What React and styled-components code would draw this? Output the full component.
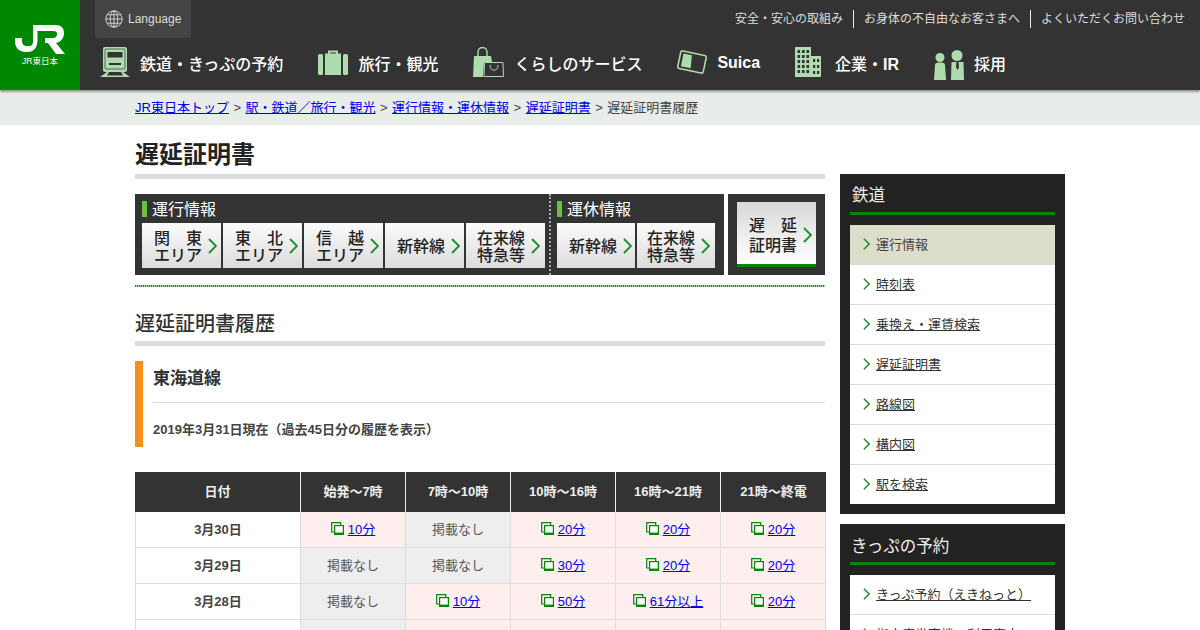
import React from 'react';
import styled, { createGlobalStyle } from 'styled-components';

const GlobalStyle = createGlobalStyle`
  html, body {
    margin: 0;
    height: 630px;
    overflow: hidden;
    background: #fff;
    color: #333;
    font-family: "Liberation Sans", "Noto Sans CJK JP", sans-serif;
    font-size: 13px;
  }
`;

const Header = styled.header`
  position: relative;
  z-index: 2;
  display: flex;
  height: 90px;
  background: #333;
  box-shadow: 0 2px 2px rgba(0, 0, 0, 0.35);
`;

const Logo = styled.a`
  display: flex;
  flex-direction: column;
  align-items: center;
  width: 80px;
  padding-top: 25px;
  box-sizing: border-box;
  background: #008803;
  color: #fff;
  font-size: 8.500px;
  line-height: 12px;
`;

const HeaderBody = styled.div`
  flex: 1;
  display: flex;
  flex-direction: column;
`;

const TopRow = styled.div`
  display: flex;
  justify-content: space-between;
  height: 38px;
  padding: 0 15px;
`;

const LangButton = styled.a`
  display: flex;
  align-items: center;
  gap: 5px;
  padding: 0 10px;
  background: #444;
  border-radius: 0 0 3px 3px;
  color: #ddd;
  font-size: 12px;
`;

const TopLinks = styled.div`
  display: flex;
  align-items: flex-start;
  padding-top: 10px;
`;

const TopLink = styled.a`
  padding: 0 10px;
  color: #ddd;
  font-size: 12px;
  line-height: 18px;
  border-left: 1px solid #eee;
  &:first-child {
    border-left: none;
  }
  &:last-child {
    padding-right: 0;
  }
`;

const Nav = styled.nav`
  display: flex;
  align-items: center;
  gap: 35px;
  height: 52px;
  padding-left: 20px;
`;

const NavItem = styled.a`
  display: flex;
  align-items: center;
  gap: 10px;
  color: #fff;
  font-size: 16px;
  font-weight: 500;
  white-space: nowrap;
  b {
    font-weight: 700;
  }
`;

const NavIcon = styled.span`
  display: flex;
  margin-bottom: ${(p) => -2 * p.$shift}px;
`;

const NavText = styled.span`
  padding-bottom: 2px;
`;

const Crumbs = styled.div`
  height: 35px;
  line-height: 35px;
  padding-left: 135px;
  background: #e8ede9;
  color: #444;
  font-size: 13px;
  a {
    color: #00e;
    text-decoration: underline;
  }
`;

const CrumbSep = styled.span`
  padding: 0 4.500px;
`;

const Page = styled.div`
  display: flex;
  gap: 15px;
  width: 930px;
  margin: 0 auto;
`;

const Main = styled.main`
  width: 690px;
`;

const Side = styled.aside`
  width: 225px;
  padding-top: 49px;
`;

const Title = styled.h1`
  margin: 0;
  padding-top: 13px;
  height: 36px;
  border-bottom: 5px solid #ddd;
  color: #222;
  font-size: 24px;
  font-weight: 700;
  line-height: 34px;
`;

const TabsRow = styled.div`
  display: flex;
  gap: 4px;
  margin-top: 15px;
  height: 81px;
`;

const TabPanel = styled.div`
  display: flex;
  background: #333;
`;

const TabGroup = styled.div`
  padding: 7px 0 0 7px;
  width: ${(p) => p.$width}px;
  box-sizing: border-box;
  & + & {
    border-left: 2px dotted #aaa;
    padding-left: 6px;
  }
`;

const TabHeading = styled.div`
  display: flex;
  align-items: flex-start;
  gap: 5px;
  height: 16px;
  margin-bottom: 6px;
  color: #fff;
  font-size: 16px;
  line-height: 18px;
  &::before {
    content: '';
    width: 5px;
    height: 16px;
    background: #6cc040;
  }
`;

const TabButtons = styled.div`
  display: flex;
  gap: 2px;
`;

const TabButton = styled.a`
  display: flex;
  align-items: center;
  gap: 6px;
  width: ${(p) => p.$width || 79}px;
  height: 45px;
  padding-left: ${(p) => p.$pad || 12}px;
  box-sizing: border-box;
  background: linear-gradient(#fbfbfb, #dcdcdc);
  color: #222;
  font-size: 16px;
  font-weight: 500;
  line-height: 17px;
`;

const TabLabel = styled.span`
  width: 48px;
  padding-top: 2px;
  white-space: pre;
`;

const ActivePanel = styled(TabPanel)`
  width: 97px;
  padding: 8px 9px;
  box-sizing: border-box;
`;

const ActiveTab = styled(TabButton)`
  height: 65px;
  padding-top: 3px;
  background: linear-gradient(#d8d8d8, #fff);
  border-bottom: 3px solid #008803;
  line-height: 20px;
`;

const GreenDots = styled.div`
  height: 2px;
  margin-top: 10px;
  background: repeating-linear-gradient(90deg, #1c8a1c 0 1px, #a8d0a8 1px 2px);
`;

const SubTitle = styled.h2`
  margin: 24px 0 0;
  height: 30px;
  border-bottom: 5px solid #ddd;
  color: #333;
  font-size: 20px;
  font-weight: 500;
  line-height: 26px;
`;

const LineBox = styled.section`
  margin-top: 15px;
  height: 86px;
  padding-left: 10px;
  border-left: 8px solid #f7901e;
  box-sizing: border-box;
`;

const LineName = styled.h3`
  margin: 0;
  height: 41px;
  border-bottom: 1px solid #ddd;
  color: #333;
  font-size: 17px;
  font-weight: 700;
  line-height: 36px;
`;

const LineNote = styled.p`
  margin: 0;
  color: #444;
  font-size: 13px;
  font-weight: 700;
  line-height: 54px;
`;

const Table = styled.table`
  width: 691px;
  margin-top: 25px;
  table-layout: fixed;
  border-collapse: separate;
  border-spacing: 0;
`;

const Th = styled.th`
  width: 105px;
  height: 40px;
  padding: 0 0 4px;
  box-sizing: border-box;
  background: #333;
  border-left: 1px solid #eee;
  color: #eee;
  font-size: 13px;
  font-weight: 700;
  &:first-child {
    width: 165px;
    border-left: none;
  }
  &:last-child {
    width: 106px;
  }
`;

const DateCell = styled.td`
  height: 36px;
  padding: 0 0 3px;
  box-sizing: border-box;
  border-left: 1px solid #ddd;
  border-bottom: 1px solid #ddd;
  background: #fff;
  color: #444;
  font-weight: 700;
  text-align: center;
`;

const Cell = styled.td`
  height: 36px;
  padding: 0 0 3px;
  box-sizing: border-box;
  border-left: 1px solid #ddd;
  border-bottom: 1px solid #ddd;
  background: ${(p) => (p.$late ? '#ffeeee' : '#eeeeee')};
  color: #555;
  text-align: center;
  &:last-child {
    border-right: 1px solid #ddd;
  }
  a {
    color: #00e;
    text-decoration: underline;
  }
  svg {
    margin-right: 4px;
    vertical-align: -1px;
  }
`;

const SideBox = styled.div`
  padding: 12px 10px 10px;
  margin-bottom: 10px;
  background: #222;
`;

const SideTitle = styled.div`
  height: 26px;
  padding-left: ${(p) => (p.$big ? 1 : 2)}px;
  border-bottom: 3px solid #008803;
  margin-bottom: 10px;
  color: #eee;
  font-size: 16.500px;
  line-height: ${(p) => (p.$big ? 20 : 18)}px;
`;

const SideList = styled.ul`
  margin: 0;
  padding: 0;
  list-style: none;
  background: #fff;
`;

const SideItem = styled.li`
  display: flex;
  align-items: center;
  gap: 6px;
  height: 40px;
  padding: 0 0 2px 13px;
  box-sizing: border-box;
  background: ${(p) => (p.$active ? '#ddddcc' : '#fff')};
  border-bottom: 1px solid ${(p) => (p.$active ? '#ddddcc' : '#ddd')};
  color: #444;
  font-size: 13px;
  &:last-child {
    height: 39px;
    border-bottom: none;
  }
  a {
    color: #333;
    text-decoration: underline;
  }
`;

const Chevron = ({ w = 9, h = 16, sw = 1.9 }) => (
  <svg width={w} height={h} viewBox="0 0 9 16" fill="none" style={{ flex: 'none' }}>
    <path d="M1 1l7 7-7 7" stroke="#1b8f2a" strokeWidth={sw} />
  </svg>
);

const CopyIcon = () => (
  <svg width="13" height="13" viewBox="0 0 13 13" fill="none">
    <path d="M3 10H.7V.7h9V3" stroke="#008803" strokeWidth="1.2" />
    <rect x="3.6" y="3.6" width="8.8" height="8.8" fill="#fff" stroke="#008803" strokeWidth="1.2" />
    <rect x="3" y="10.6" width="10" height="2.4" fill="#008803" />
  </svg>
);

const JrMark = () => (
  <svg width="50" height="30" viewBox="0 0 50 30">
    <path
      d="M0 13h7v3c0 3 2 5 5 5h2c3 0 4-2 4-5V0h4.500v15c0 8-4 12-10 12H11C4 27 0 23 0 16z"
      fill="#fff"
    />
    <path
      d="M22 0h19c5 0 8 3 8 8s-3 9-8 10l9 11h-9l-8-11h-3v-5h8c3 0 4-2 4-4s-1-3-4-3H22z"
      fill="#fff"
    />
  </svg>
);

const GlobeIcon = () => (
  <svg width="18" height="18" viewBox="0 0 18 18" fill="none" stroke="#ddd" strokeWidth="0.9">
    <circle cx="9" cy="9" r="8.200" />
    <ellipse cx="9" cy="9" rx="3.800" ry="8.200" />
    <path d="M9 .8v16.400M.8 9h16.400M2 4.800h14M2 13.200h14" />
  </svg>
);

const G = '#aedcae';

const TrainIcon = () => (
  <svg width="30" height="30" viewBox="0 0 30 30">
    <rect x="3" y="0" width="24" height="25" rx="2" fill={G} />
    <rect x="5" y="2" width="20" height="20" rx="1" fill="none" stroke="#333" strokeWidth="0.7" />
    <rect x="7.500" y="5" width="15" height="5.500" fill="#333" />
    <rect x="9" y="16" width="12" height="2" fill="#333" />
    <path d="M7 25L0 30h30l-7-5h-2l2 3.500H7l2-3.500z" fill={G} />
  </svg>
);

const CaseIcon = () => (
  <svg width="30" height="25" viewBox="0 0 30 25">
    <path d="M11 5V1.500h8V5" fill="none" stroke={G} strokeWidth="2" />
    <rect x="0" y="4" width="5" height="21" rx="1.500" fill={G} />
    <rect x="7" y="3.500" width="16" height="21.500" fill={G} />
    <rect x="25" y="4" width="5" height="21" rx="1.500" fill={G} />
  </svg>
);

const BagIcon = () => (
  <svg width="31" height="30" viewBox="0 0 31 30">
    <path d="M5 9V5a4.500 4.500 0 0 1 9 0v4" fill="none" stroke={G} strokeWidth="1.400" />
    <path d="M1 9h17l1 6H11l-1 15H0z" fill={G} />
    <path d="M11.500 15.500h18.500l.5 14h-19.500z" fill="#333" stroke={G} strokeWidth="1" />
    <path d="M17 18c0 7 8 7 8 0" fill="none" stroke={G} strokeWidth="1" />
  </svg>
);

const CardIcon = () => (
  <svg width="30" height="24" viewBox="0 0 30 24">
    <g transform="rotate(12 15 12)">
      <rect x="2" y="3" width="26" height="18" rx="2" fill="#333" stroke={G} strokeWidth="1.600" />
      <path d="M5 5.500h8.500l1.500 13H5z" fill={G} />
    </g>
  </svg>
);

const BuildingIcon = () => {
  const windows = [];
  for (let r = 0; r < 5; r += 1) {
    for (let c = 0; c < 3; c += 1) {
      windows.push(<rect key={`a${r}${c}`} x={2.5 + c * 4.5} y={3 + r * 5} width="2.600" height="3" fill="#333" />);
    }
  }
  return (
    <svg width="26" height="30" viewBox="0 0 26 30" style={{ marginRight: 4 }}>
      <rect x="0" y="0" width="16" height="30" fill={G} />
      <rect x="16" y="9" width="10" height="21" fill={G} />
      {windows}
      <rect x="18" y="12" width="2.200" height="3" fill="#333" />
      <rect x="22" y="12" width="2.200" height="3" fill="#333" />
      <rect x="18" y="18" width="2.200" height="3" fill="#333" />
      <rect x="22" y="18" width="2.200" height="3" fill="#333" />
      <rect x="18" y="24" width="2.200" height="3" fill="#333" />
      <rect x="22" y="24" width="2.200" height="3" fill="#333" />
    </svg>
  );
};

const PeopleIcon = () => (
  <svg width="30" height="30" viewBox="0 0 30 30">
    <circle cx="6" cy="7.500" r="4.500" fill={G} />
    <path d="M1 15c0-2 2-2.500 5-2.500s5 .5 5 2.500l1 15H0z" fill={G} />
    <circle cx="23" cy="5.500" r="5.500" fill={G} />
    <path d="M17.500 12h12l.5 18H17z" fill={G} />
    <path d="M22.500 12h2l.5 5-1.500 3-1.500-3z" fill="#333" />
  </svg>
);

const NAV = [
  { label: '鉄道・きっぷの予約', Icon: TrainIcon, shift: -2 },
  { label: '旅行・観光', Icon: CaseIcon, shift: -2 },
  { label: 'くらしのサービス', Icon: BagIcon, shift: -2 },
  { label: <b>Suica</b>, key: 'suica', Icon: CardIcon, shift: -2 },
  { label: <>企業・<b>IR</b></>, key: 'corp', Icon: BuildingIcon, shift: -2 },
  { label: '採用', Icon: PeopleIcon, shift: 1 },
];

const RUN_TABS = ['関　東\nエリア', '東　北\nエリア', '信　越\nエリア', '新幹線', '在来線\n特急等'];
const STOP_TABS = ['新幹線', '在来線\n特急等'];

const HOURS = ['始発～7時', '7時～10時', '10時～16時', '16時～21時', '21時～終電'];

const ROWS = [
  { date: '3月30日', cells: ['10分', null, '20分', '20分', '20分'] },
  { date: '3月29日', cells: [null, null, '30分', '20分', '20分'] },
  { date: '3月28日', cells: [null, '10分', '50分', '61分以上', '20分'] },
  { date: '3月27日', cells: [null, '10分', '20分', '20分', '20分'] },
];

const RAIL_LINKS = ['時刻表', '乗換え・運賃検索', '遅延証明書', '路線図', '構内図', '駅を検索'];
const TICKET_LINKS = ['きっぷ予約（えきねっと）', '指定席券売機・利用案内'];

const App = () => {
  return (
    <>
      <GlobalStyle />
      <Header>
        <Logo>
          <JrMark />
          <span>JR東日本</span>
        </Logo>
        <HeaderBody>
          <TopRow>
            <LangButton>
              <GlobeIcon />
              Language
            </LangButton>
            <TopLinks>
              <TopLink>安全・安心の取組み</TopLink>
              <TopLink>お身体の不自由なお客さまへ</TopLink>
              <TopLink>よくいただくお問い合わせ</TopLink>
            </TopLinks>
          </TopRow>
          <Nav>
            {NAV.map(({ label, key, Icon, shift }) => (
              <NavItem key={key || label}>
                <NavIcon $shift={shift}>
                  <Icon />
                </NavIcon>
                <NavText>{label}</NavText>
              </NavItem>
            ))}
          </Nav>
        </HeaderBody>
      </Header>
      <Crumbs>
        <a href="#top">JR東日本トップ</a>
        <CrumbSep>&gt;</CrumbSep>
        <a href="#rail">駅・鉄道／旅行・観光</a>
        <CrumbSep>&gt;</CrumbSep>
        <a href="#info">運行情報・運休情報</a>
        <CrumbSep>&gt;</CrumbSep>
        <a href="#cert">遅延証明書</a>
        <CrumbSep>&gt;</CrumbSep>
        遅延証明書履歴
      </Crumbs>
      <Page>
        <Main>
          <Title>遅延証明書</Title>
          <TabsRow>
            <TabPanel>
              <TabGroup $width={414}>
                <TabHeading>運行情報</TabHeading>
                <TabButtons>
                  {RUN_TABS.map((t) => (
                    <TabButton key={t} $pad={t.startsWith('在来線') ? 11 : 12}>
                      <TabLabel>{t}</TabLabel>
                      <Chevron />
                    </TabButton>
                  ))}
                </TabButtons>
              </TabGroup>
              <TabGroup $width={175}>
                <TabHeading>運休情報</TabHeading>
                <TabButtons>
                  {STOP_TABS.map((t) => (
                    <TabButton key={t} $width={78} $pad={t.startsWith('在来線') ? 10 : 12}>
                      <TabLabel>{t}</TabLabel>
                      <Chevron />
                    </TabButton>
                  ))}
                </TabButtons>
              </TabGroup>
            </TabPanel>
            <ActivePanel>
              <ActiveTab>
                <TabLabel>{'遅　延\n証明書'}</TabLabel>
                <Chevron />
              </ActiveTab>
            </ActivePanel>
          </TabsRow>
          <GreenDots />
          <SubTitle>遅延証明書履歴</SubTitle>
          <LineBox>
            <LineName>東海道線</LineName>
            <LineNote>2019年3月31日現在（過去45日分の履歴を表示）</LineNote>
          </LineBox>
          <Table>
            <thead>
              <tr>
                <Th>日付</Th>
                {HOURS.map((h) => (
                  <Th key={h}>{h}</Th>
                ))}
              </tr>
            </thead>
            <tbody>
              {ROWS.map((row) => (
                <tr key={row.date}>
                  <DateCell>{row.date}</DateCell>
                  {row.cells.map((c, i) =>
                    c ? (
                      <Cell key={i} $late>
                        <CopyIcon />
                        <a href="#cert">{c}</a>
                      </Cell>
                    ) : (
                      <Cell key={i}>掲載なし</Cell>
                    ),
                  )}
                </tr>
              ))}
            </tbody>
          </Table>
        </Main>
        <Side>
          <SideBox>
            <SideTitle>鉄道</SideTitle>
            <SideList>
              <SideItem $active>
                <Chevron w={7} h={12} />
                運行情報
              </SideItem>
              {RAIL_LINKS.map((l) => (
                <SideItem key={l}>
                  <Chevron w={7} h={12} />
                  <a href="#rail">{l}</a>
                </SideItem>
              ))}
            </SideList>
          </SideBox>
          <SideBox>
            <SideTitle $big>きっぷの予約</SideTitle>
            <SideList>
              {TICKET_LINKS.map((l) => (
                <SideItem key={l}>
                  <Chevron w={7} h={12} />
                  <a href="#ticket">{l}</a>
                </SideItem>
              ))}
            </SideList>
          </SideBox>
        </Side>
      </Page>
    </>
  );
};

export default App;
